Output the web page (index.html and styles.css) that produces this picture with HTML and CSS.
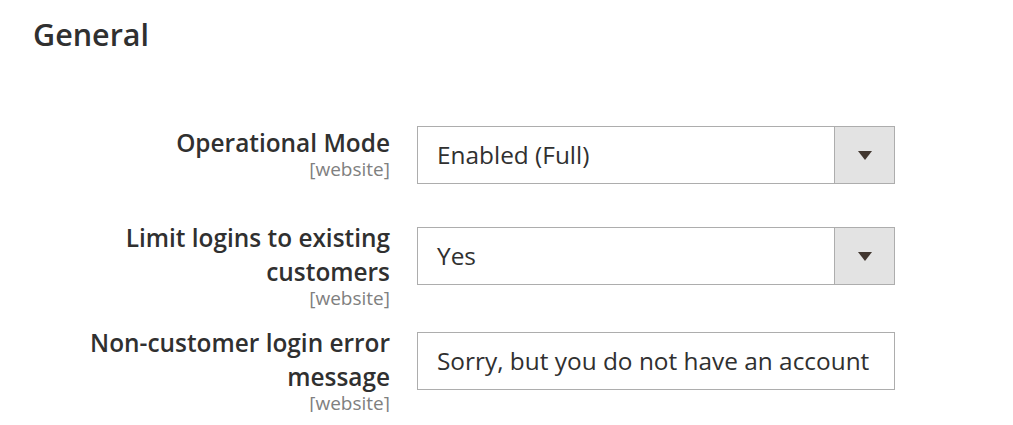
FILE: index.html
```html
<!DOCTYPE html>
<html>
<head>
<meta charset="utf-8">
<link rel="stylesheet" href="styles.css">
</head>
<body>
<div class="section">
  <h2 class="title">General</h2>
  <div class="fields">
    <div class="row row-1">
      <div class="label"><span class="label-text">Operational Mode</span><span class="scope">[website]</span></div>
      <div class="control select">
        <span class="value">Enabled (Full)</span>
        <span class="btn"><span class="arrow"></span></span>
      </div>
    </div>
    <div class="row row-2">
      <div class="label"><span class="label-text">Limit logins to existing customers</span><span class="scope">[website]</span></div>
      <div class="control select">
        <span class="value">Yes</span>
        <span class="btn"><span class="arrow"></span></span>
      </div>
    </div>
    <div class="row row-3">
      <div class="label"><span class="label-text">Non-customer login error message</span><span class="scope">[website]</span></div>
      <div class="control input">
        <span class="value">Sorry, but you do not have an account</span>
      </div>
    </div>
  </div>
</div>
</body>
</html>
```
FILE: styles.css
```css
html, body {
  margin: 0;
  padding: 0;
  background: #fff;
}
body {
  font-family: "Open Sans", "Noto Sans", sans-serif;
  color: #303030;
}
.section {
  padding: 12px 0 0 33px;
}
.title {
  margin: 0;
  font-size: 30.5px;
  font-weight: 600;
  line-height: 44px;
  color: #303030;
}
.fields {
  margin-top: 70px;
}
.row {
  display: flex;
  align-items: flex-start;
}
.row-1 { margin-bottom: 43px; }
.row-2 { margin-bottom: 25px; }
.label {
  width: 357px;
  margin-right: 27px;
  text-align: right;
  display: flex;
  flex-direction: column;
  align-items: flex-end;
}
.label-text {
  font-size: 24.4px;
  font-weight: 600;
  line-height: 34px;
  color: #303030;
}
.row-2 .label, .row-3 .label {
  margin-top: -6px;
}
.scope {
  font-size: 19px;
  line-height: 18px;
  color: #808080;
}
.control {
  width: 478px;
  height: 58px;
  box-sizing: border-box;
  border: 1px solid #adadad;
  display: flex;
  align-items: center;
  background: #fff;
}
.value {
  flex: 1;
  padding-left: 19px;
  padding-bottom: 2px;
  font-size: 24.4px;
  color: #303030;
  white-space: nowrap;
  overflow: hidden;
}
.btn {
  width: 59px;
  align-self: stretch;
  background: #e3e3e3;
  border-left: 1px solid #adadad;
  display: flex;
  align-items: center;
  justify-content: center;
}
.arrow {
  width: 0;
  height: 0;
  border-left: 7px solid transparent;
  border-right: 7px solid transparent;
  border-top: 9px solid #41362f;
}
```
